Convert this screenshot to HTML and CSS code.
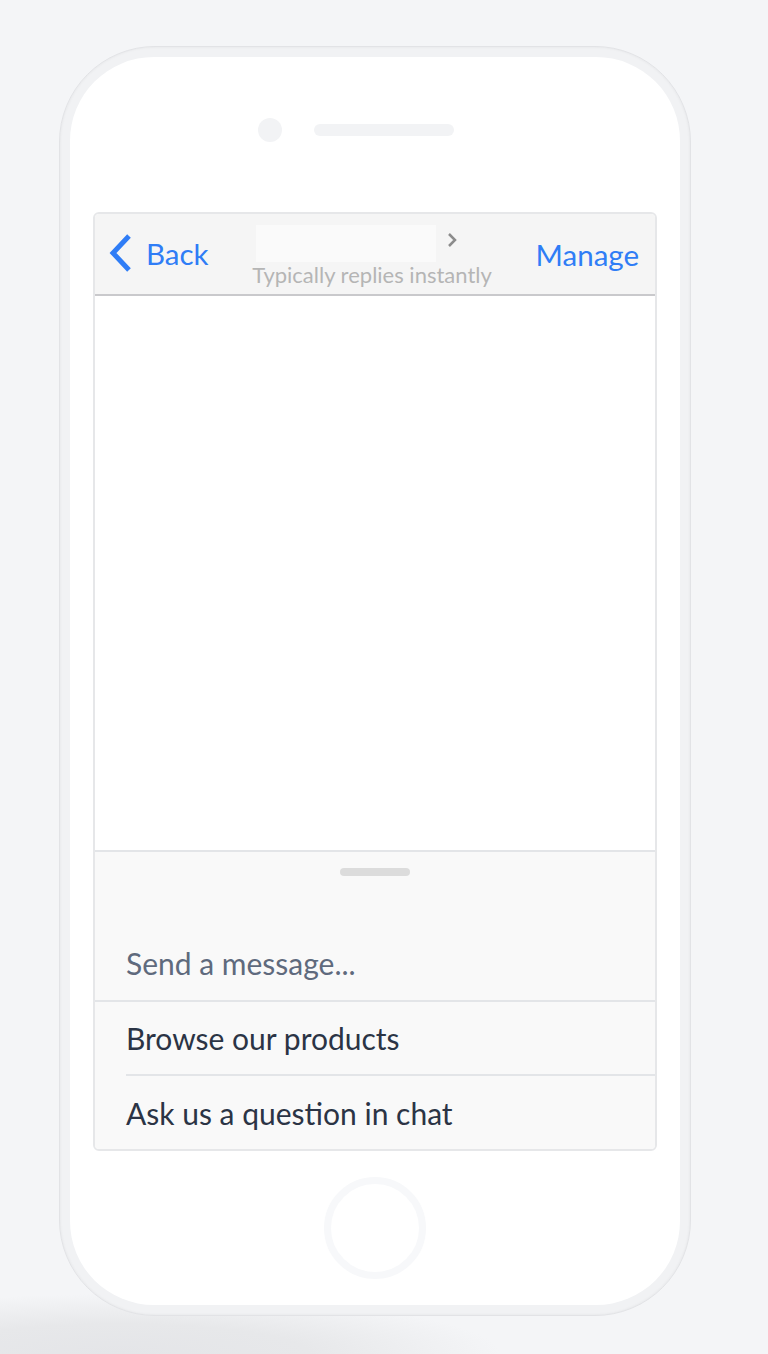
FILE: index.html
```html
<!DOCTYPE html>
<html lang="en">
<head>
    <meta charset="UTF-8">
    <meta name="viewport" content="width=device-width, initial-scale=1.0">
    <title>Chat preview</title>
    <link rel="stylesheet" href="styles.css">
</head>
<body>
    <div class="phone">
        <div class="screen">
            <div class="top">
                <span class="camera"></span>
                <span class="speaker"></span>
            </div>

            <div class="chat">
                <div class="header">
                    <a class="back" href="#">
                        <svg width="26" height="40" viewBox="0 0 26 40">
                            <path d="M21 3 L5 20 L21 37" fill="none" stroke="#2f7df6" stroke-width="5"/>
                        </svg>
                        <span>Back</span>
                    </a>
                    <div class="title">
                        <div class="title-row">
                            <span class="name"></span>
                            <svg width="12" height="16" viewBox="0 0 12 16">
                                <path d="M3 2 L9 8 L3 14" fill="none" stroke="#8c8c8c" stroke-width="2.5"/>
                            </svg>
                        </div>
                        <div class="subtitle">Typically replies instantly</div>
                    </div>
                    <a class="manage" href="#">Manage</a>
                </div>

                <div class="messages"></div>

                <div class="composer">
                    <div class="handle-area"><span class="handle"></span></div>
                    <div class="row input">Send a message...</div>
                    <div class="row option first">Browse our products</div>
                    <div class="row option">Ask us a question in chat</div>
                </div>
            </div>

            <div class="home"></div>
        </div>
    </div>
</body>
</html>
```

FILE: styles.css
```css
body {
    margin: 0;
    height: 1354px;
    font-family: Lato, "Open Sans", Arial, sans-serif;
    background:
        radial-gradient(ellipse 380px 60px at 120px 100%, #e4e5e8 0, #e7e8ea 50%, rgba(244, 245, 247, 0) 100%),
        #f4f5f7;
    overflow: hidden;
}
.phone {
    margin: 46px 0 0 59px;
    width: 610px;
    height: 1248px;
    padding: 10px;
    border: 1px solid #e2e3e6;
    border-radius: 96px;
    background: #f1f2f4;
    box-shadow: inset 0 0 3px rgba(0, 0, 0, 0.06);
}
.screen {
    height: 100%;
    border-radius: 84px;
    background: #fff;
    display: flex;
    flex-direction: column;
    align-items: center;
}
.top {
    height: 155px;
    width: 100%;
    box-sizing: border-box;
    padding: 61px 0 0 188px;
    display: flex;
    align-items: flex-start;
    align-self: flex-start;
    gap: 32px;
}
.camera {
    width: 24px;
    height: 24px;
    border-radius: 50%;
    background: #f2f3f5;
}
.speaker {
    margin-top: 6px;
    width: 140px;
    height: 12px;
    border-radius: 6px;
    background: #f2f3f5;
}
.chat {
    width: 560px;
    border: 2px solid #e6e7e9;
    border-radius: 6px;
    overflow: hidden;
}
.header {
    height: 80px;
    background: #f5f5f5;
    border-bottom: 2px solid #c9c9cc;
    display: flex;
    justify-content: space-between;
    align-items: center;
    padding: 0 16px 0 13px;
}
.header a {
    color: #2f7df6;
    text-decoration: none;
    font-size: 29.5px;
}
.back {
    display: flex;
    align-items: center;
    gap: 12px;
    margin-bottom: 2px;
}
.back span {
    margin-top: 1px;
}
.title {
    align-self: flex-start;
    margin-top: 11px;
}
.title-row {
    display: flex;
    align-items: center;
    gap: 10px;
    padding-left: 4px;
}
.name {
    width: 180px;
    height: 37px;
    background: #fafafa;
}
.title-row svg {
    margin-top: -8px;
}
.subtitle {
    font-size: 22px;
    line-height: 25px;
    color: #b5b5b5;
}
.messages {
    height: 554px;
    background: #fff;
    border-bottom: 2px solid #e3e5e8;
}
.composer {
    background: #f9f9f9;
}
.handle-area {
    height: 74px;
    display: flex;
    justify-content: center;
}
.handle {
    margin-top: 16px;
    width: 70px;
    height: 8px;
    border-radius: 4px;
    background: #dcdcdc;
}
.row {
    display: flex;
    align-items: center;
    font-size: 30px;
    color: #2b3445;
}
.input {
    height: 74px;
    padding-left: 31px;
    color: #5f6a7d;
    border-bottom: 2px solid #e3e5e8;
}
.option {
    height: 72px;
    margin-left: 31px;
}
.option.first {
    border-bottom: 2px solid #e3e5e8;
}
.option:last-child {
    height: 73px;
}
.home {
    margin-top: 26px;
    width: 88px;
    height: 88px;
    border: 7px solid #f7f8fa;
    border-radius: 50%;
}
```
